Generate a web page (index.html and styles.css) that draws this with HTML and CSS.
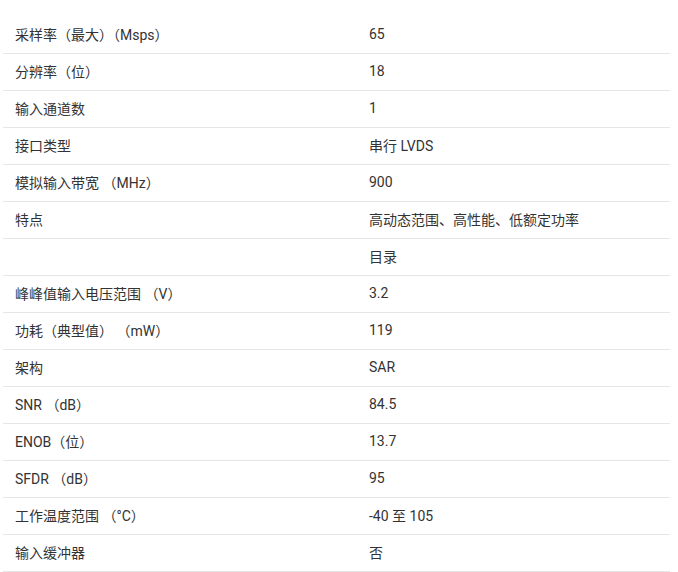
FILE: index.html
```html
<!DOCTYPE html>
<html lang="zh-CN">
<head>
<meta charset="utf-8">
<link rel="stylesheet" href="styles.css">
</head>
<body>
<div class="spec">
  <div class="row"><div class="k">采样率（最大）（Msps）</div><div class="v">65</div></div>
  <div class="row"><div class="k">分辨率（位）</div><div class="v">18</div></div>
  <div class="row"><div class="k">输入通道数</div><div class="v">1</div></div>
  <div class="row"><div class="k">接口类型</div><div class="v">串行 LVDS</div></div>
  <div class="row"><div class="k">模拟输入带宽 （MHz）</div><div class="v">900</div></div>
  <div class="row"><div class="k">特点</div><div class="v">高动态范围、高性能、低额定功率</div></div>
  <div class="row"><div class="k"></div><div class="v">目录</div></div>
  <div class="row"><div class="k">峰峰值输入电压范围 （V）</div><div class="v">3.2</div></div>
  <div class="row"><div class="k">功耗（典型值） （mW）</div><div class="v">119</div></div>
  <div class="row"><div class="k">架构</div><div class="v">SAR</div></div>
  <div class="row"><div class="k">SNR （dB）</div><div class="v">84.5</div></div>
  <div class="row"><div class="k">ENOB（位）</div><div class="v">13.7</div></div>
  <div class="row"><div class="k">SFDR （dB）</div><div class="v">95</div></div>
  <div class="row"><div class="k">工作温度范围 （°C）</div><div class="v">-40 至 105</div></div>
  <div class="row"><div class="k">输入缓冲器</div><div class="v">否</div></div>
</div>
</body>
</html>
```
FILE: styles.css
```css
html, body {
  margin: 0;
  padding: 0;
  background: #ffffff;
}
body {
  font-family: Roboto, "Noto Sans CJK SC", sans-serif;
  font-size: 14px;
  color: #333333;
}
.spec {
  margin: 17px 0 0 3px;
  width: 667px;
}
.row {
  display: grid;
  grid-template-columns: 354px 1fr;
  height: 36px;
  align-items: center;
  border-bottom: 1px solid #e6e6e6;
}
.k, .v {
  padding-left: 12px;
  padding-bottom: 2px;
  white-space: pre;
}
```
